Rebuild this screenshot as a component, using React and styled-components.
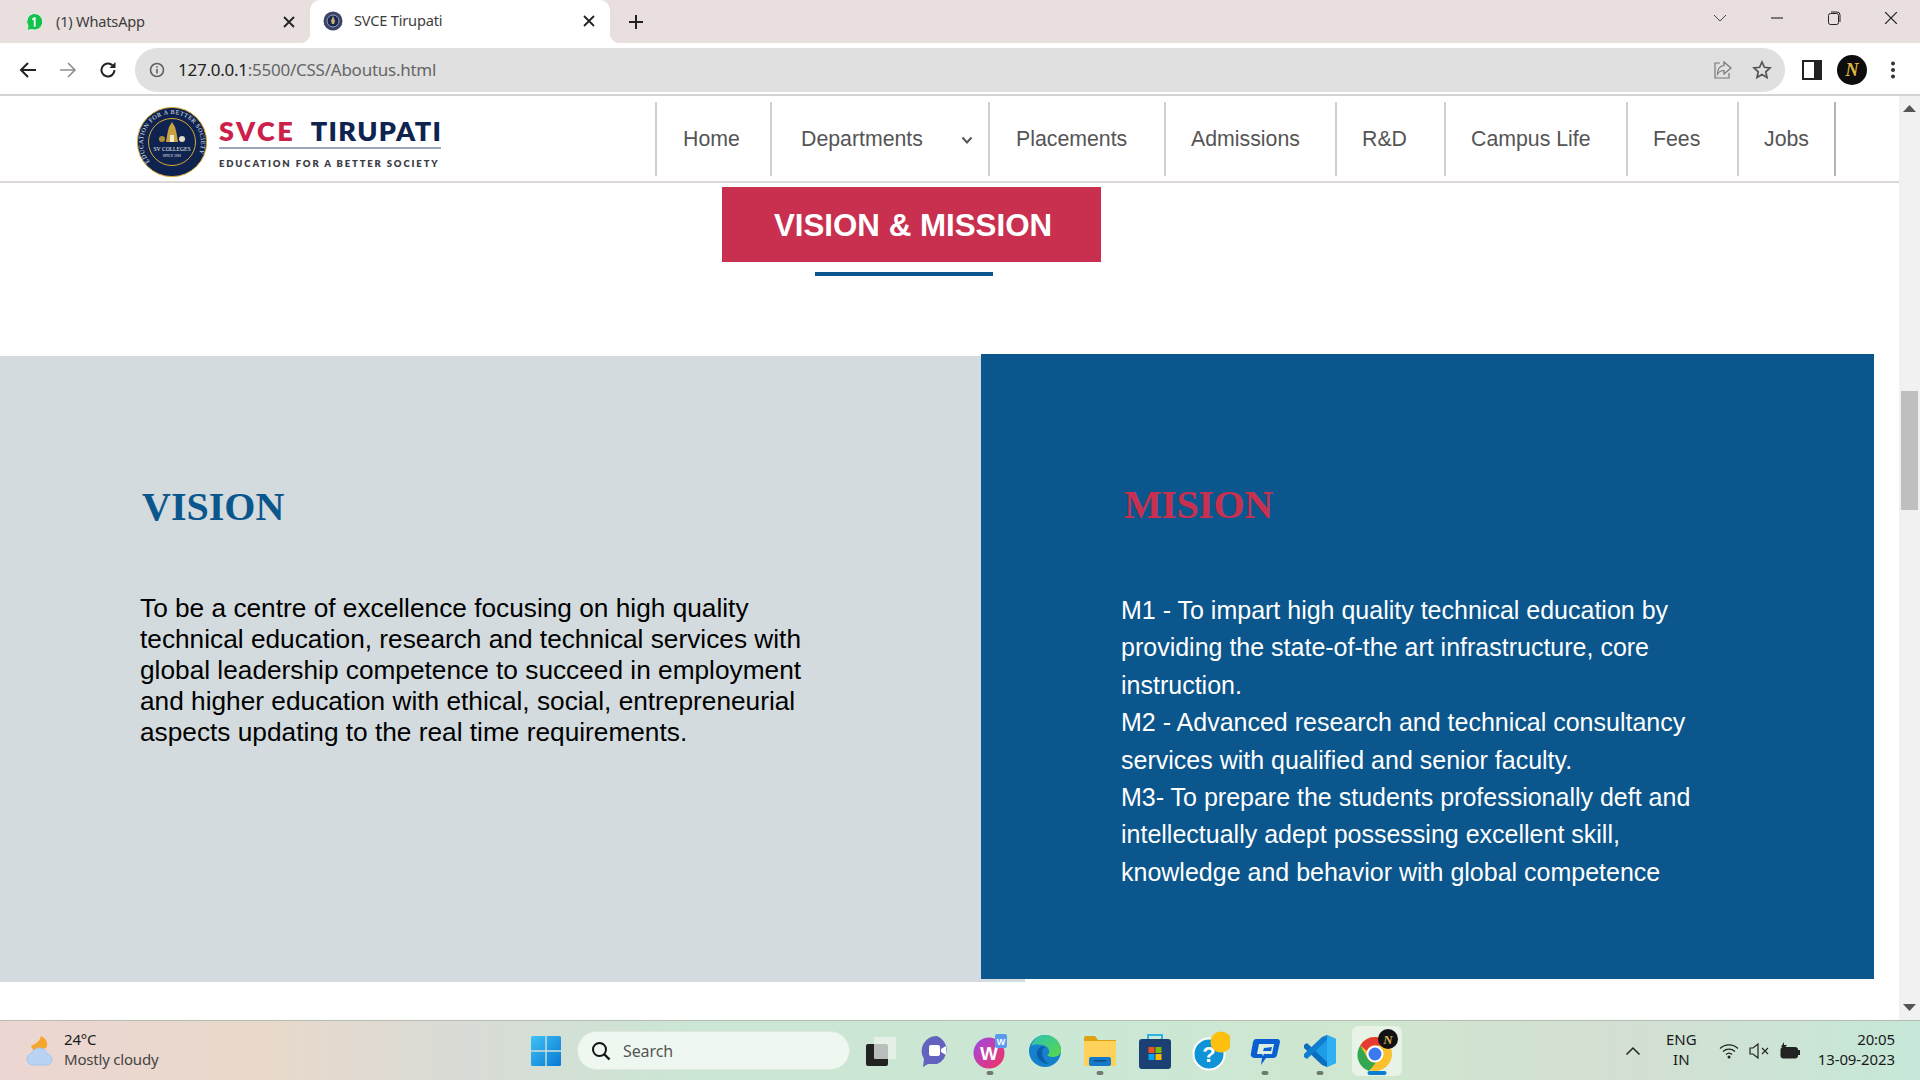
import React from "react";
import styled, { createGlobalStyle } from "styled-components";

const Global = createGlobalStyle`
  html, body { margin: 0; padding: 0; background: #fff; overflow: hidden; }
  * { box-sizing: border-box; }
`;

const UI = `"Noto Sans", "Open Sans", sans-serif`;
const WEB = `"Liberation Sans", Arial, sans-serif`;

const Screen = styled.div`
  width: 1920px; height: 1080px; display: flex; flex-direction: column; overflow: hidden; background: #fff;
`;

/* ---- browser chrome ---- */
const TabStrip = styled.div`
  height: 43px; flex: none; display: flex; align-items: flex-end; background: #e8dfde; padding-left: 10px; font-family: ${UI};
`;
const Tab = styled.div`
  position: relative; width: ${p => p.$w}px; height: ${p => p.$active ? 43 : 41}px; display: flex; align-items: center;
  padding: 0 15px 2px ${p => p.$pad}px; font-size: 14.6px; letter-spacing: -0.2px; color: #3d3d3d;
  background: ${p => p.$active ? "#fff" : "transparent"};
  border-radius: 10px 10px 0 0;
  ${p => p.$active && `
    &::before, &::after { content: ""; position: absolute; bottom: 0; width: 10px; height: 10px; }
    &::before { left: -10px; background: radial-gradient(circle at 0 0, #e8dfde 10px, #fff 10.5px); }
    &::after { right: -10px; background: radial-gradient(circle at 100% 0, #e8dfde 10px, #fff 10.5px); }
  `}
`;
const Favicon = styled.span`
  display: flex; width: 20px; height: 20px; margin-right: 11px; flex: none;
`;
const TabTitle = styled.span`flex: 1; white-space: nowrap; padding-bottom: 2px;`;
const NewTab = styled.span`display: flex; margin-left: 18px; margin-bottom: 13px;`;
const WindowControls = styled.div`
  margin-left: auto; height: 43px; display: flex; align-items: flex-start; padding: 11px 1px 0 0; gap: 0;
`;
const WinBtn = styled.span`display: flex; justify-content: center; width: ${p => p.$w}px;`;

const Toolbar = styled.div`
  height: 53px; flex: none; display: flex; align-items: flex-start; padding: 5px 0 0 19px; background: #fff;
  border-bottom: 2px solid #d4d2d2; font-family: ${UI};
`;
const NavIcon = styled.span`display: flex; width: ${p => p.$w || 40}px; height: 44px; align-items: center; justify-content: flex-start;`;
const Omnibox = styled.div`
  width: 1650px; height: 44px; border-radius: 22px; background: #e0e0e0; display: flex; align-items: center;
  padding: 0 13px 0 14px; font-size: 17px; letter-spacing: -0.25px; color: #666;
`;
const Host = styled.span`color: #222;`;
const Url = styled.span`margin-left: 13px; white-space: nowrap; padding-bottom: 2px;`;
const OmniEnd = styled.span`margin-left: auto; display: flex; gap: 19px; align-items: center;`;
const ToolEnd = styled.div`display: flex; align-items: center; height: 44px; margin-left: 17px; gap: 15px;`;
const Avatar = styled.span`
  width: 30px; height: 30px; border-radius: 50%; background: #0d0d10; color: #e2b93b; font: italic 700 18px "Liberation Serif", serif;
  display: flex; align-items: center; justify-content: center;
`;
const MenuDots = styled.span`display: flex; margin-left: 5px;`;

/* ---- page ---- */
const Viewport = styled.div`flex: 1; min-height: 0; display: flex;`;
const Page = styled.div`flex: 1; min-width: 0; display: flex; flex-direction: column; font-family: ${WEB};`;
const SiteHeader = styled.header`
  height: 87px; flex: none; display: flex; align-items: flex-start; padding: 0 63px 0 137px; border-bottom: 2px solid #ddd8d5;
`;
const Logo = styled.div`display: flex; align-items: flex-start; gap: 12px; margin-top: 11px;`;
const LogoText = styled.div`display: flex; flex-direction: column; padding-top: 11px; width: 222px;`;
const LogoName = styled.div`
  display: flex; justify-content: space-between; font: 800 27px/26px Lato, sans-serif; white-space: nowrap;
  padding-bottom: 3px; border-bottom: 2px solid #9aa6bc;
`;
const LogoRed = styled.span`color: #cc1f4a; letter-spacing: 2.5px;`;
const LogoNavy = styled.span`color: #0e2350; letter-spacing: 1.4px; margin-right: -1.4px;`;
const LogoTag = styled.div`
  margin-top: 9px; font: 800 9.5px/12px Lato, sans-serif; letter-spacing: 1.85px; color: #3a3d45; white-space: nowrap;
`;
const SiteNav = styled.nav`margin-left: auto; display: flex; margin-top: 6px;`;
const NavItem = styled.div`
  width: ${p => p.$w}px; height: 74px; border-left: 2px solid #d3cdce; ${p => p.$last && "border-right: 2px solid #b5b5b5;"}
  display: flex; align-items: center; position: relative; color: #555; font-size: 21.3px;
  padding-left: ${p => p.$pl}px;
`;
const Caret = styled.span`position: absolute; right: 15px; top: 34px; display: flex;`;

const TitleBlock = styled.div`
  flex: none; padding: 4px 0 0 722px; height: 171px;
`;
const TitleButton = styled.div`
  width: 379px; height: 75px; background: #c9304f; color: #fff; font-weight: 700; font-size: 31.3px;
  display: flex; align-items: center; justify-content: center; padding: 2px 0 0 3px;
`;
const TitleRule = styled.div`width: 178px; height: 4px; margin: 10px 0 0 93px; background: #0b568c;`;

const Panels = styled.div`display: flex; align-items: flex-start; flex: none;`;
const VisionPanel = styled.section`
  width: 1025px; height: 626px; margin-top: 2px; background: #d3dbde; padding: 128px 0 0 140px; flex: none;
`;
const MissionPanel = styled.section`
  position: relative; width: 893px; height: 625px; margin-left: -44px; background: #0b568c; flex: none; padding: 128px 0 0 140px;
`;
const PanelHeading = styled.h2`
  margin: 0 0 0 ${p => p.$indent}px; font: 700 40px/46px "Liberation Serif", "Times New Roman", serif; color: ${p => p.$color};
  letter-spacing: ${p => p.$ls || 0}px;
`;
const VisionBody = styled.p`
  margin: 63px 0 0; width: 680px; font-size: 26.25px; line-height: 31px; color: #000;
`;
const MissionBody = styled.p`
  margin: 64px 0 0; width: 600px; font-size: 25px; line-height: 37.4px; color: #fff;
`;

const Scrollbar = styled.div`
  width: 21px; flex: none; background: #f1f1f1; display: flex; flex-direction: column; align-items: center; padding-top: 9px;
`;
const ScrollThumb = styled.div`width: 17px; height: 119px; margin-top: 279px; background: #bfbfbf;`;
const ScrollDown = styled.div`margin-top: auto; margin-bottom: 9px; display: flex;`;

/* ---- taskbar ---- */
const Taskbar = styled.footer`
  height: 60px; flex: none; display: flex; align-items: center; border-top: 1px solid #b6bdb2; font-family: ${UI}; color: #1b1b1b;
  background: linear-gradient(90deg, #ecd6d2 0%, #e8d9cb 14%, #d9dbd6 24%, #cbe6d4 36%, #cbe8d4 60%, #d0e6cf 72%, #d3dfd2 84%, #c6e8d8 100%);
`;
const Weather = styled.div`display: flex; align-items: center; width: 531px; padding-left: 24px; gap: 4px; flex: none;`;
const WeatherText = styled.div`font-size: 15px; line-height: 20px; letter-spacing: -0.2px; margin-bottom: 4px;`;
const WeatherSub = styled.div`color: #444;`;
const StartBtn = styled.span`display: flex; width: 46px;`;
const SearchBox = styled.div`
  width: 273px; height: 39px; border-radius: 20px; background: #eff8f0; display: flex; align-items: center; gap: 12px; padding-left: 13px;
  border: 1px solid #dfe7df; font-size: 16px; color: #555; letter-spacing: -0.1px; flex: none;
`;
const TaskIcons = styled.div`display: flex; margin-left: 2px; flex: none;`;
const TaskIcon = styled.span`
  position: relative; width: ${p => p.$current ? 50 : 55}px; height: 50px; display: flex; align-items: center; justify-content: center;
  ${p => p.$current && "background: rgba(255,255,255,.5); border-radius: 6px; margin-left: 5px;"}
  ${p => p.$run && `&::after { content: ""; position: absolute; bottom: 1px; left: 50%; transform: translateX(-50%);
    width: ${p.$current ? 19 : 7}px; height: 4px; border-radius: 2px; background: ${p.$current ? "#0a7fd1" : "#6f7a70"}; }`}
`;
const Tray = styled.div`margin-left: auto; display: flex; align-items: center; padding-right: 25px;`;
const TrayIcon = styled.span`display: flex; margin-left: ${p => p.$ml || 0}px;`;
const Lang = styled.div`margin: 0 0 3px 25px; font-size: 15px; line-height: 20px; text-align: center;`;
const Clock = styled.div`margin: 0 0 3px 17px; font-size: 15px; line-height: 20px; text-align: right; letter-spacing: -0.1px;`;

/* ---- drawings ---- */
const WhatsAppIcon = () => (
  <svg width="20" height="20" viewBox="0 0 20 20"><path d="M10 1.5a8.3 8.3 0 0 0-7 12.7L2 18.5l4.4-1A8.3 8.3 0 1 0 10 1.5z" fill="#12c24b" stroke="#dff3e4" /><path d="M10.6 5.2v9.6H8.8V7.4L7.2 8.3V6.6l2-1.4z" fill="#fff" /></svg>
);
const SealMini = () => (
  <svg width="20" height="20" viewBox="0 0 20 20"><circle cx="10" cy="10" r="9.5" fill="#3b4468" /><circle cx="10" cy="10" r="6" fill="#1a2850" stroke="#9aa0b5" /><path d="M10 5l2 5-1 3H9l-1-3z" fill="#c9b27a" /></svg>
);
const X = ({ s = 12, c = "#222", w = 1.8 }) => (
  <svg width={s} height={s} viewBox="0 0 12 12"><path d="M1 1l10 10M11 1L1 11" stroke={c} strokeWidth={w} fill="none" /></svg>
);
const Seal = () => (
  <svg width="70" height="70" viewBox="0 0 70 70">
    <defs><path id="ring" d="M14.500 56.500A29 29 0 1 1 55.500 56.500" /></defs>
    <circle cx="35" cy="35" r="34.6" fill="#0e2350" stroke="#d9a92f" strokeWidth="1" />
    <circle cx="35" cy="35" r="23.500" fill="#0e2350" stroke="#d9a92f" strokeWidth="1" />
    <text fontFamily="Liberation Serif, serif" fontSize="6.2" fill="#e9edf5" letterSpacing=".5"><textPath href="#ring" startOffset="2%">EDUCATION FOR A BETTER SOCIETY</textPath></text>
    <path d="M35 15l3 5 1.500 6 1.500 9-12 0 1.500-9 1.500-6z" fill="#c9a23f" />
    <path d="M33 28h4v7h-4z" fill="#f0ead0" />
    <circle cx="25" cy="32" r="3" fill="#b08f3c" /><circle cx="45" cy="32" r="3" fill="#e3ddc9" />
    <text x="35" y="44" textAnchor="middle" fontFamily="Liberation Serif, serif" fontSize="5.6" fill="#f0f0e8">SV COLLEGES</text>
    <text x="35" y="50" textAnchor="middle" fontFamily="Liberation Serif, serif" fontSize="3.6" fill="#f0f0e8">SINCE 1981</text>
  </svg>
);
const Sky = () => (
  <svg width="36" height="36" viewBox="0 0 36 36">
    <path d="M17 3c-1 4-3 7-10 10 1 3 3 5 6 5l9-3c3-4 0-10-5-12z" fill="#f4a72c" />
    <path d="M9 32c-4 0-6-3-6-6s2-5 5-6c1-3 4-5 7-5 4 0 7 2 8 6 3 0 5 3 5 5.500S26 32 23 32z" fill="#b9d3f3" stroke="#a5c4ec" />
  </svg>
);
const WinLogo = () => (
  <svg width="30" height="30" viewBox="0 0 30 30">
    <defs><linearGradient id="wg" x1="0" y1="0" x2="1" y2="1"><stop offset="0" stopColor="#3fc2f5" /><stop offset="1" stopColor="#0778d4" /></linearGradient></defs>
    <path d="M0 1.500A1.500 1.500 0 0 1 1.500 0H14.300V14.300H0zM15.700 0H28.500A1.500 1.500 0 0 1 30 1.500V14.300H15.700zM0 15.700H14.300V30H1.500A1.500 1.500 0 0 1 0 28.500zM15.700 15.700H30V28.500A1.500 1.500 0 0 1 28.500 30H15.700z" fill="url(#wg)" />
  </svg>
);
const TaskView = () => (
  <svg width="32" height="32" viewBox="0 0 32 32"><rect x="2" y="9" width="22" height="22" rx="2" fill="#222" /><rect x="10" y="2" width="22" height="22" rx="1" fill="#eef3ee" opacity=".75" /></svg>
);
const Meet = () => (
  <svg width="32" height="34" viewBox="-2 0 32 34">
    <path d="M16 2a15 15 0 0 1 0 28H7l-5 3 1-8A15 15 0 0 1 16 2z" fill="#6363bf" /><rect x="8" y="11" width="11" height="11" rx="2" fill="#fff" /><path d="M20 15l5-3v9l-5-3z" fill="#fff" />
  </svg>
);
const Wps = () => (
  <svg width="36" height="36" viewBox="0 0 36 36">
    <defs><linearGradient id="wp" x1="0" y1="0" x2="1" y2="1"><stop offset="0" stopColor="#9b48e8" /><stop offset="1" stopColor="#f6325c" /></linearGradient></defs>
    <circle cx="17" cy="20" r="15.500" fill="url(#wp)" />
    <text x="17" y="27" textAnchor="middle" fontFamily="Liberation Sans, sans-serif" fontWeight="700" fontSize="19" fill="#fff">W</text>
    <rect x="23" y="1" width="12" height="14" rx="2" fill="#5b9bef" /><text x="29" y="12" textAnchor="middle" fontFamily="Liberation Sans, sans-serif" fontSize="9" fontWeight="700" fill="#fff">W</text>
  </svg>
);
const Edge = () => (
  <svg width="34" height="34" viewBox="0 0 34 34">
    <defs><linearGradient id="eg" x1="0" y1="0" x2="1" y2="1"><stop offset="0" stopColor="#2ec2b3" /><stop offset="1" stopColor="#5ad94a" /></linearGradient></defs>
    <circle cx="17" cy="17" r="16" fill="#1580cc" />
    <path d="M3 12C6 4 12 1 17 1c9 0 16 7 16 15 0 5-4 7-8 7-3 0-5-1-6-2 3-1 3-5 0-8-5-3-12-3-16-1z" fill="url(#eg)" />
    <path d="M14 18c0-3 2-5 4-5-5-2-10 2-9 8 1 5 6 9 12 9-5-3-7-8-7-12z" fill="#0c5ea8" />
  </svg>
);
const Folder = () => (
  <svg width="34" height="32" viewBox="0 0 34 32">
    <path d="M1 3a2 2 0 0 1 2-2h9l3 4h18v6H1z" fill="#dfa10f" /><rect x="1" y="6" width="32" height="25" rx="1" fill="#fdd15a" />
    <rect x="6" y="22" width="22" height="9" rx="2" fill="#1579c9" /><rect x="11" y="25" width="12" height="1.500" fill="#0b4a82" />
  </svg>
);
const Store = () => (
  <svg width="32" height="36" viewBox="0 0 32 36">
    <path d="M9 6V2h14v4" fill="none" stroke="#2bb3e6" strokeWidth="2" /><rect y="6" width="32" height="30" rx="3" fill="#1c3f74" />
    <rect x="9.500" y="14" width="6" height="6" fill="#f25022" /><rect x="16.500" y="14" width="6" height="6" fill="#7fba00" />
    <rect x="9.500" y="21" width="6" height="6" fill="#00a4ef" /><rect x="16.500" y="21" width="6" height="6" fill="#ffb900" />
  </svg>
);
const Help = () => (
  <svg width="40" height="40" viewBox="-3 0 40 40">
    <circle cx="16" cy="23" r="15.500" fill="#0e93d6" stroke="#fff" strokeWidth="2" />
    <text x="16" y="31" textAnchor="middle" fontFamily="Liberation Sans, sans-serif" fontWeight="700" fontSize="22" fill="#fff">?</text>
    <circle cx="28" cy="11" r="10.500" fill="#fdc00f" />
  </svg>
);
const Chat = () => (
  <svg width="32" height="32" viewBox="0 0 32 32">
    <path d="M7 4h21c2 0 3 1 3 3l-3 13c-.5 2-2 3-4 3h-7l-5 7 1-7H6c-3 0-5-2-4-5L4 7c.5-2 1.500-3 3-3z" fill="#0a5fd0" />
    <path d="M10 9h15l-2 10h-8l-1 2-1-2H8z" fill="#dceee0" /><path d="M15 13l8-1-1 4h-8z" fill="#0a5fd0" />
  </svg>
);
const VSCode = () => (
  <svg width="34" height="34" viewBox="0 0 34 34">
    <path d="M24 1l9 4v24l-9 4-14-13z" fill="#1f9ce8" /><path d="M24 1v32l9-4V5z" fill="#2fb0f2" />
    <path d="M1 11l3-2 20 19v5l-5 -2L1 14z" fill="#0b6fbf" /><path d="M1 23l3 2L24 6V1l-5 2L1 20z" fill="#0f7dd0" />
  </svg>
);
const ChromeN = () => (
  <svg width="44" height="44" viewBox="0 0 44 44">
    <circle cx="20" cy="25" r="17" fill="#fbc02d" />
    <path d="M20 8a17 17 0 0 1 14.700 8.500H20a8.500 8.500 0 0 0-8 5.500L5.300 16.500A17 17 0 0 1 20 8z" fill="#e53b30" />
    <path d="M5.300 16.500L12 28a9 9 0 0 0 9 5.500L14 42A17 17 0 0 1 5.300 16.500z" fill="#34a750" />
    <circle cx="20" cy="25" r="8.500" fill="#fff" /><circle cx="20" cy="25" r="6.500" fill="#3b79ee" />
    <circle cx="33" cy="10" r="10" fill="#111116" />
    <text x="33" y="15" textAnchor="middle" fontFamily="Liberation Serif, serif" fontStyle="italic" fontWeight="700" fontSize="13" fill="#d7b34a">N</text>
  </svg>
);

const navItems = [["Home", 115, 26], ["Departments", 218, 29, true], ["Placements", 176, 26], ["Admissions", 171, 25], ["R&D", 109, 25], ["Campus Life", 182, 25], ["Fees", 111, 25], ["Jobs", 99, 25]];

export default function App() {
  return (
    <Screen>
      <Global />
      <TabStrip>
        <Tab $w={300} $pad={15}>
          <Favicon><WhatsAppIcon /></Favicon>
          <TabTitle>(1) WhatsApp</TabTitle>
          <X />
        </Tab>
        <Tab $w={300} $active $pad={13}>
          <Favicon><SealMini /></Favicon>
          <TabTitle>SVCE Tirupati</TabTitle>
          <X />
        </Tab>
        <NewTab>
          <svg width="16" height="16" viewBox="0 0 16 16"><path d="M8 1v14M1 8h14" stroke="#222" strokeWidth="2" /></svg>
        </NewTab>
        <WindowControls>
          <WinBtn $w={56}><svg width="14" height="14" viewBox="0 0 14 14"><path d="M1 4l6 6 6-6" fill="none" stroke="#444" /></svg></WinBtn>
          <WinBtn $w={57}><svg width="14" height="14" viewBox="0 0 14 14"><path d="M1 7h12" stroke="#222" strokeWidth="1.100" /></svg></WinBtn>
          <WinBtn $w={57}><svg width="14" height="14" viewBox="0 0 14 14"><rect x="1.500" y="2.500" width="10" height="11" rx="2" fill="none" stroke="#222" /><path d="M4 1h6a3 3 0 0 1 3 3v7" fill="none" stroke="#222" /></svg></WinBtn>
          <WinBtn $w={57}><X s={14} w={1.100} /></WinBtn>
        </WindowControls>
      </TabStrip>
      <Toolbar>
        <NavIcon><svg width="18" height="18" viewBox="0 0 18 18"><path d="M17 9H2M9 2L2 9l7 7" fill="none" stroke="#222" strokeWidth="2" /></svg></NavIcon>
        <NavIcon><svg width="18" height="18" viewBox="0 0 18 18"><path d="M1 9h15M9 2l7 7-7 7" fill="none" stroke="#8e8e8e" strokeWidth="1.600" /></svg></NavIcon>
        <NavIcon $w={36}><svg width="18" height="18" viewBox="0 0 18 18"><path d="M15.500 9a6.500 6.500 0 1 1-2-4.700" fill="none" stroke="#222" strokeWidth="2" /><path d="M16.500 1v6h-6z" fill="#222" /></svg></NavIcon>
        <Omnibox>
          <svg width="16" height="16" viewBox="0 0 16 16"><circle cx="8" cy="8" r="6.500" fill="none" stroke="#5f5f5f" strokeWidth="1.600" /><path d="M8 7v4.500M8 4.200v1.600" stroke="#5f5f5f" strokeWidth="1.600" /></svg>
          <Url><Host>127.0.0.1</Host>:5500/CSS/Aboutus.html</Url>
          <OmniEnd>
            <svg width="20" height="20" viewBox="0 0 20 20"><path d="M7 3H2v15h14v-5" fill="none" stroke="#777" strokeWidth="1.200" /><path d="M11 2l7 6-7 6v-3.500c-3 0-5 1-6.500 3.500 0-5 2-8 6.500-8.500z" fill="none" stroke="#777" strokeWidth="1.200" /></svg>
            <svg width="20" height="20" viewBox="0 0 20 20"><path d="M10 2l2.400 5.300 5.600.6-4.200 3.900 1.200 5.700-5-2.900-5 2.900 1.200-5.700L2 7.900l5.600-.6z" fill="none" stroke="#555" strokeWidth="1.700" /></svg>
          </OmniEnd>
        </Omnibox>
        <ToolEnd>
          <svg width="20" height="20" viewBox="0 0 20 20"><path d="M1 1h18v18H1z" fill="none" stroke="#222" strokeWidth="2" /><rect x="12" y="1" width="7" height="18" fill="#222" /></svg>
          <Avatar>N</Avatar>
          <MenuDots><svg width="12" height="20" viewBox="0 0 12 20"><circle cx="6" cy="3.500" r="2" fill="#333" /><circle cx="6" cy="10" r="2" fill="#333" /><circle cx="6" cy="16.500" r="2" fill="#333" /></svg></MenuDots>
        </ToolEnd>
      </Toolbar>

      <Viewport>
        <Page>
          <SiteHeader>
            <Logo>
              <Seal />
              <LogoText>
                <LogoName><LogoRed>SVCE</LogoRed><LogoNavy>TIRUPATI</LogoNavy></LogoName>
                <LogoTag>EDUCATION FOR A BETTER SOCIETY</LogoTag>
              </LogoText>
            </Logo>
            <SiteNav>
              {navItems.map(([label, w, pl, caret], i) => (
                <NavItem key={label} $w={w} $pl={pl} $last={i === navItems.length - 1}>
                  {label}
                  {caret && <Caret><svg width="12" height="9" viewBox="0 0 12 9"><path d="M1.500 1.500L6 6.500l4.500-5" fill="none" stroke="#555" strokeWidth="2" /></svg></Caret>}
                </NavItem>
              ))}
            </SiteNav>
          </SiteHeader>
          <TitleBlock>
            <TitleButton>VISION &amp; MISSION</TitleButton>
            <TitleRule />
          </TitleBlock>
          <Panels>
            <VisionPanel>
              <PanelHeading $color="#0b568c" $indent={2}>VISION</PanelHeading>
              <VisionBody>
                To be a centre of excellence focusing on high quality technical education, research and technical services with global leadership competence to succeed in employment and higher education with ethical, social, entrepreneurial aspects updating to the real time requirements.
              </VisionBody>
            </VisionPanel>
            <MissionPanel>
              <PanelHeading $color="#c9304f" $indent={3} $ls={-0.4}>MISION</PanelHeading>
              <MissionBody>
                M1 - To impart high quality technical education by providing the state-of-the art infrastructure, core instruction.<br />
                M2 - Advanced research and technical consultancy services with qualified and senior faculty.<br />
                M3- To prepare the students professionally deft and intellectually adept possessing excellent skill, knowledge and behavior with global competence
              </MissionBody>
            </MissionPanel>
          </Panels>
        </Page>
        <Scrollbar>
          <svg width="13" height="7" viewBox="0 0 13 7"><path d="M6.500 0L13 7H0z" fill="#555" /></svg>
          <ScrollThumb />
          <ScrollDown><svg width="13" height="7" viewBox="0 0 13 7"><path d="M0 0h13L6.500 7z" fill="#555" /></svg></ScrollDown>
        </Scrollbar>
      </Viewport>

      <Taskbar>
        <Weather>
          <Sky />
          <WeatherText>24°C<WeatherSub>Mostly cloudy</WeatherSub></WeatherText>
        </Weather>
        <StartBtn><WinLogo /></StartBtn>
        <SearchBox>
          <svg width="20" height="20" viewBox="0 0 20 20"><circle cx="8.500" cy="8.500" r="6.500" fill="none" stroke="#111" strokeWidth="2" /><path d="M13 13l5.500 5.500" stroke="#111" strokeWidth="2.400" /></svg>
          Search
        </SearchBox>
        <TaskIcons>
          <TaskIcon><TaskView /></TaskIcon>
          <TaskIcon><Meet /></TaskIcon>
          <TaskIcon $run><Wps /></TaskIcon>
          <TaskIcon><Edge /></TaskIcon>
          <TaskIcon $run><Folder /></TaskIcon>
          <TaskIcon><Store /></TaskIcon>
          <TaskIcon><Help /></TaskIcon>
          <TaskIcon $run><Chat /></TaskIcon>
          <TaskIcon $run><VSCode /></TaskIcon>
          <TaskIcon $run $current><ChromeN /></TaskIcon>
        </TaskIcons>
        <Tray>
          <TrayIcon><svg width="16" height="10" viewBox="0 0 16 10"><path d="M1.500 8.500L8 2l6.500 6.500" fill="none" stroke="#222" strokeWidth="1.500" /></svg></TrayIcon>
          <Lang>ENG<br />IN</Lang>
          <TrayIcon $ml={22}><svg width="20" height="16" viewBox="0 0 20 16"><path d="M1 5.500a13 13 0 0 1 18 0M4 8.500a9 9 0 0 1 12 0M7 11.500a4.500 4.500 0 0 1 6 0" fill="none" stroke="#222" strokeWidth="1.300" /><circle cx="10" cy="14" r="1.500" fill="#222" /></svg></TrayIcon>
          <TrayIcon $ml={10}><svg width="20" height="16" viewBox="0 0 20 16"><path d="M1 5h3l5-4v14l-5-4H1z" fill="none" stroke="#222" strokeWidth="1.200" /><path d="M13 5l6 6M19 5l-6 6" stroke="#222" strokeWidth="1.100" /></svg></TrayIcon>
          <TrayIcon $ml={10}><svg width="22" height="18" viewBox="0 0 22 18"><rect x="2" y="5.500" width="16.500" height="10.500" rx="2" fill="#222" stroke="#222" /><rect x="19" y="8" width="2" height="5" fill="#222" /><path d="M5 0L2 5h3l-1 3 4-5H5z" fill="#222" /></svg></TrayIcon>
          <Clock>20:05<br />13-09-2023</Clock>
        </Tray>
      </Taskbar>
    </Screen>
  );
}
